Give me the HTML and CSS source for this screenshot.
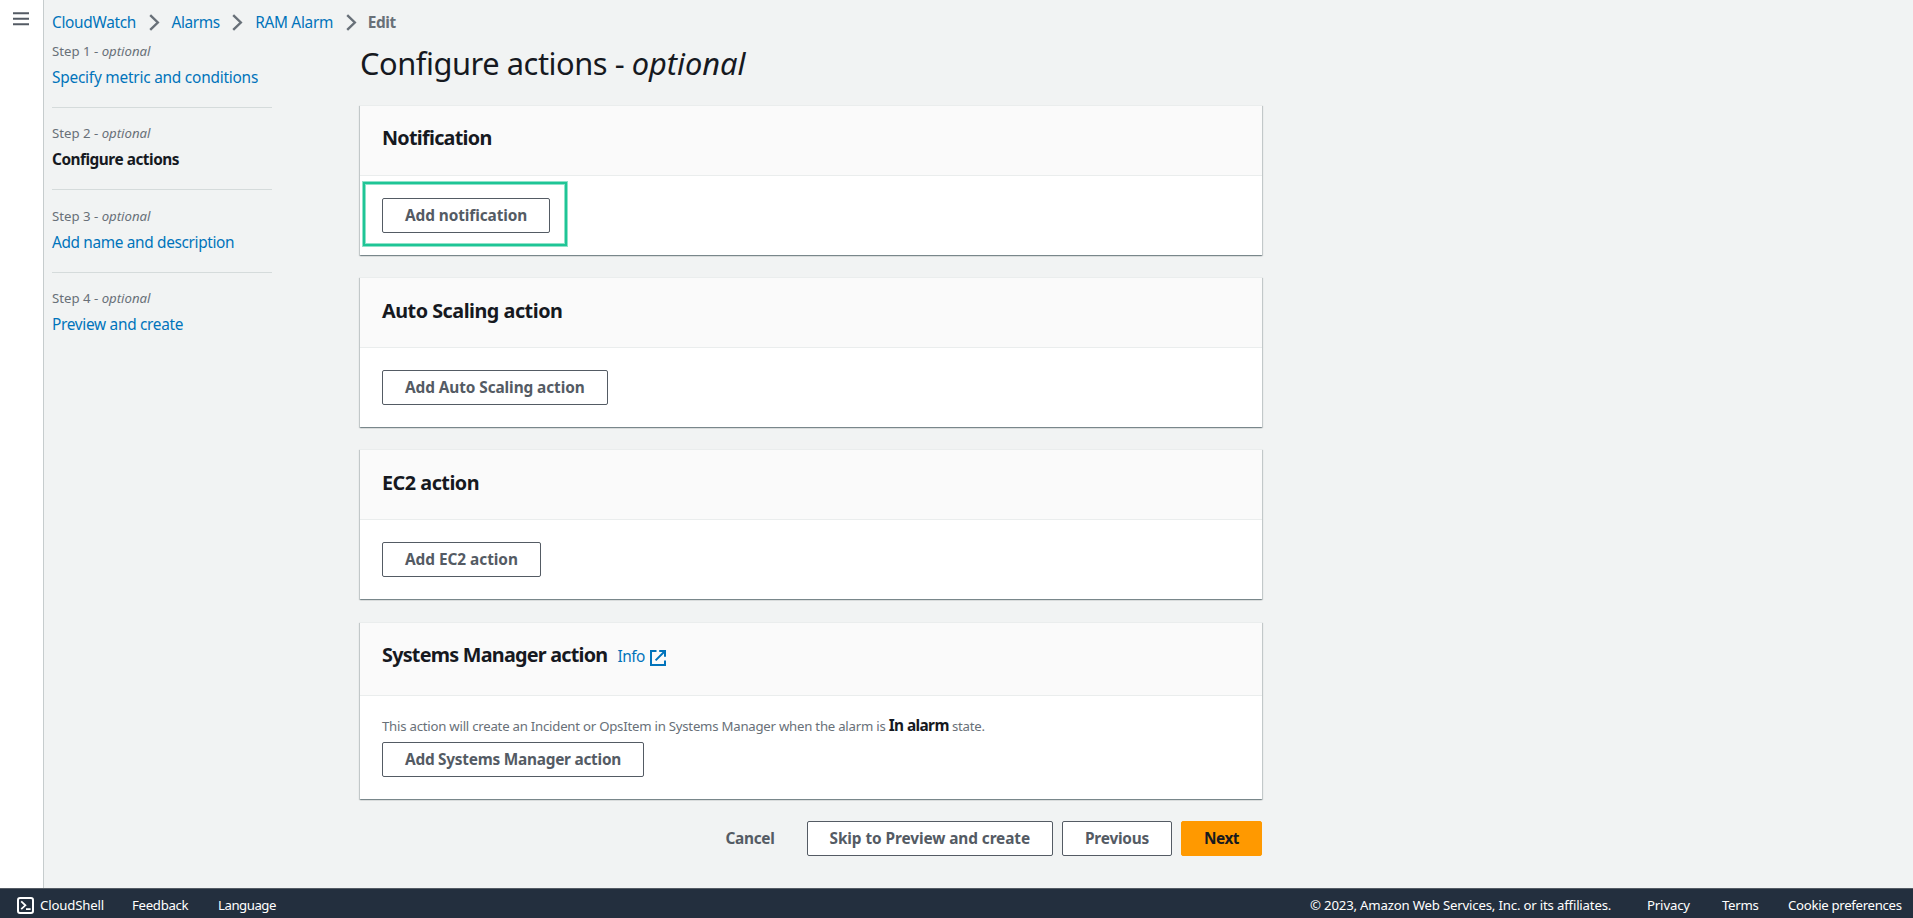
FILE: index.html
```
<!DOCTYPE html>
<html lang="en">
<head>
<meta charset="utf-8">
<title>Configure actions - CloudWatch</title>
<link rel="stylesheet" href="styles.css">
</head>
<body>
<div class="app">
  <aside class="rail">
    <svg class="menu" width="16" height="14" viewBox="0 0 16 14"><path d="M0 1.2h16M0 6.8h16M0 12.2h16" stroke="#545b64" stroke-width="2"/></svg>
  </aside>
  <main class="main">
    <nav class="crumbs">
      <a class="crumb crumb-service">CloudWatch</a>
      <svg class="chev" width="11" height="17" viewBox="0 0 11 17"><path d="M1.2 1.2 8.8 8.5 1.2 15.8"/></svg>
      <a class="crumb crumb-alarms">Alarms</a>
      <svg class="chev" width="11" height="17" viewBox="0 0 11 17"><path d="M1.2 1.2 8.8 8.5 1.2 15.8"/></svg>
      <a class="crumb crumb-name">RAM Alarm</a>
      <svg class="chev" width="11" height="17" viewBox="0 0 11 17"><path d="M1.2 1.2 8.8 8.5 1.2 15.8"/></svg>
      <span class="crumb crumb-current">Edit</span>
    </nav>
    <div class="columns">
      <ol class="steps">
        <li class="step"><span class="step-no">Step 1 - <i>optional</i></span><a class="step-link">Specify metric and conditions</a></li>
        <li class="step"><span class="step-no">Step 2 - <i>optional</i></span><b class="step-link step-active">Configure actions</b></li>
        <li class="step"><span class="step-no">Step 3 - <i>optional</i></span><a class="step-link step-name">Add name and description</a></li>
        <li class="step"><span class="step-no">Step 4 - <i>optional</i></span><a class="step-link step-preview">Preview and create</a></li>
      </ol>
      <div class="content">
        <h1 class="title">Configure actions - <i>optional</i></h1>
        <section class="card">
          <header class="card-head"><h2 class="notify-title">Notification</h2></header>
          <div class="card-body">
            <div class="marked"><button class="btn">Add notification</button><span class="mark"></span></div>
          </div>
        </section>
        <section class="card">
          <header class="card-head"><h2>Auto Scaling action</h2></header>
          <div class="card-body"><button class="btn">Add Auto Scaling action</button></div>
        </section>
        <section class="card">
          <header class="card-head"><h2>EC2 action</h2></header>
          <div class="card-body"><button class="btn btn-ec2">Add EC2 action</button></div>
        </section>
        <section class="card">
          <header class="card-head head-tall">
            <h2 class="ssm-title">Systems Manager action</h2>
            <a class="info">Info</a>
            <svg class="ext" width="17" height="16" viewBox="0 0 17 16" fill="none" stroke="#0073bb" stroke-width="2"><path d="M6.5 1H1v14h14v-4.5M9.2 1H15v5.8M15 1 5.6 10.4"/></svg>
          </header>
          <div class="card-body body-ssm">
            <p class="desc">This action will create an Incident or OpsItem in Systems Manager when the alarm is <b>In alarm</b> state.</p>
            <button class="btn btn-ssm">Add Systems Manager action</button>
          </div>
        </section>
        <div class="actions">
          <a class="cancel">Cancel</a>
          <button class="btn">Skip to Preview and create</button>
          <button class="btn btn-prev">Previous</button>
          <button class="btn btn-next">Next</button>
        </div>
      </div>
    </div>
  </main>
</div>
<footer class="footer">
  <svg class="shell" width="17" height="17" viewBox="0 0 17 17" fill="none" stroke="#fff" stroke-width="2"><rect x="1" y="1" width="15" height="15" rx="2"/><path d="M4.2 4.4 8.4 8.3 4.2 12.2M9 12.2h4.6" stroke-width="1.8"/></svg>
  <a class="f-shell">CloudShell</a>
  <a class="f-feedback">Feedback</a>
  <a class="f-lang">Language</a>
  <span class="f-copy">© 2023, Amazon Web Services, Inc. or its affiliates.</span>
  <a class="f-privacy">Privacy</a>
  <a class="f-terms">Terms</a>
  <a class="f-cookie">Cookie preferences</a>
</footer>
</body>
</html>
```
FILE: styles.css
```
* { box-sizing: border-box; }
body {
  margin: 0;
  height: 918px;
  display: flex;
  flex-direction: column;
  overflow: hidden;
  background: #f1f3f3;
  color: #16191f;
  font: 15.4px/24px "Noto Sans", sans-serif;
  white-space: nowrap;
}
h1, h2, p, ol { margin: 0; padding: 0; }
a { color: #0073bb; }

.app { display: flex; height: 888px; }
.rail { width: 44px; background: #fff; border-right: 1px solid #c6cccd; padding: 12px 0 0 13px; }
.menu { display: block; }
.main { flex: 1; padding-left: 8px; }

.crumbs { display: flex; align-items: center; height: 41px; padding-top: 4px; }
.crumb { padding-top: 1px; letter-spacing: -0.3px; }
.crumb-service { width: 84px; }
.crumb-alarms { width: 48px; letter-spacing: -0.4px; }
.crumb-name { width: 78px; }
.crumb-current { margin-left: -1px; font-weight: 700; color: #687078; letter-spacing: -0.4px; }
.chev { margin: -1px 12px 0 12.6px; fill: none; stroke: #687078; stroke-width: 2.4; }

.columns { display: flex; }
.steps { width: 220px; list-style: none; }
.step { height: 82.3px; }
.step:not(:last-child)::after { content: ""; display: block; margin-top: 17px; height: 1px; background: #d5dbdb; }
.step-no { display: block; font-size: 13.2px; line-height: 20px; color: #687078; }
.step-link { display: block; margin-top: 5px; letter-spacing: -0.22px; }
.step-active { letter-spacing: -0.49px; }
.step-name { letter-spacing: -0.35px; }
.step-preview { letter-spacing: -0.3px; }

.content { width: 902px; margin-left: 88px; }
.title { margin: 2px 0 21.8px; font-size: 30.8px; line-height: 40px; font-weight: 400; letter-spacing: -0.44px; }
.title i { letter-spacing: -0.05px; }

.card {
  margin-bottom: 22.4px;
  background: #fff;
  border-top: 1px solid #eaeded;
  box-shadow: 0 1px 1px 0 rgba(0,28,36,.3), 1px 1px 1px 0 rgba(0,28,36,.15), -1px 1px 1px 0 rgba(0,28,36,.15);
}
.card-head { display: flex; height: 69.9px; padding: 19.5px 22px 0; background: #fafafa; border-bottom: 1px solid #eaeded; }
.head-tall { height: 73.7px; }
h2 { font-size: 19.8px; line-height: 26px; font-weight: 700; letter-spacing: -0.49px; }
.notify-title { letter-spacing: -0.73px; }
.ssm-title { letter-spacing: -0.76px; }
.info { margin-left: 10px; line-height: 29px; letter-spacing: -0.5px; }
.ext { margin: 8px 0 0 5px; }
.card-body { padding: 22px; }
.body-ssm { padding-top: 17.5px; }
.desc { margin-bottom: 4px; font-size: 13.2px; line-height: 24px; height: 24px; color: #687078; letter-spacing: -0.23px; }
.desc b { font-size: 15.4px; line-height: 20px; color: #16191f; letter-spacing: -0.6px; }

.btn {
  display: block;
  height: 35px;
  padding: 0 22px;
  border: 1px solid #545b64;
  border-radius: 2px;
  background: #fff;
  color: #545b64;
  font: 700 15.4px/33px "Noto Sans", sans-serif;
  letter-spacing: -0.09px;
}
.btn-ec2 { letter-spacing: -0.04px; }
.btn-ssm { letter-spacing: -0.25px; }
.btn-prev { letter-spacing: -0.22px; }
.btn-next { border-color: #ff9900; background: #ff9900; color: #16191f; letter-spacing: -0.5px; }

.marked { position: relative; width: max-content; }
.mark {
  position: absolute;
  left: -19px;
  top: -16px;
  width: 204px;
  height: 64px;
  border: 2px solid #1fc596;
  box-shadow: 0 0 0 1px rgba(31,197,150,.5), inset 0 0 0 1px rgba(31,197,150,.5);
  pointer-events: none;
}

.actions { display: flex; justify-content: flex-end; gap: 9px; margin-top: -0.6px; }
.cancel { margin-right: 23px; color: #545b64; font-weight: 700; line-height: 35px; letter-spacing: -0.3px; }

.footer {
  display: flex;
  align-items: center;
  height: 30px;
  padding: 4px 11px 0 17px;
  background: #232f3e;
  border-top: 1px solid #545b64;
  font-size: 13.2px;
  line-height: 20px;
  letter-spacing: -0.3px;
  color: #fff;
}
.footer a, .footer span { margin-top: -2px; color: #fff; }
.footer .f-shell { width: 64px; margin-left: 6px; margin-right: 28px; letter-spacing: -0.16px; }
.footer .f-feedback { width: 56px; margin-right: 30px; }
.footer .f-lang { letter-spacing: -0.46px; }
.footer .f-copy { width: 302px; margin-left: auto; letter-spacing: -0.18px; }
.footer .f-privacy { width: 43px; margin-left: 35px; letter-spacing: -0.15px; }
.footer .f-terms { width: 36px; margin-left: 32px; }
.footer .f-cookie { width: 114px; margin-left: 30px; }
```
